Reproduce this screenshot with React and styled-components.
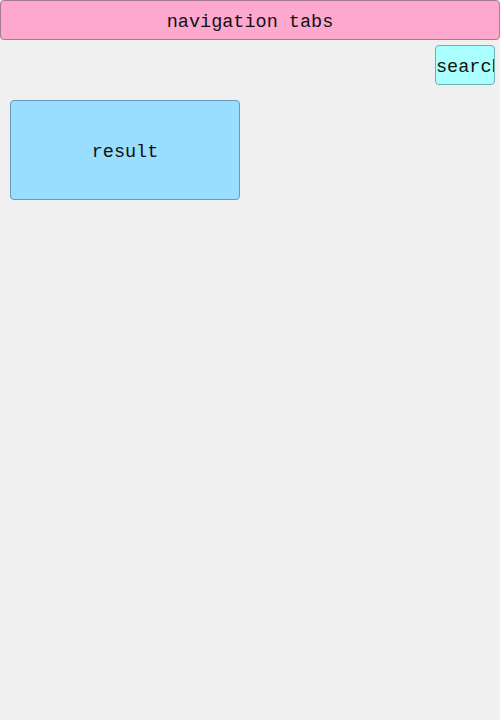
import React from 'react';
import styled, { createGlobalStyle } from 'styled-components';

const GlobalStyle = createGlobalStyle`
  html, body {
    margin: 0;
    padding: 0;
    background: #f0f0f0;
    font-family: "Liberation Mono", "DejaVu Sans Mono", monospace;
  }
`;

const Page = styled.div`
  width: 500px;
  min-height: 720px;
  display: flex;
  flex-direction: column;
`;

const NavBar = styled.div`
  height: 40px;
  box-sizing: border-box;
  padding-top: 4px;
  background: #ffa8cf;
  border: 1px solid #a67a92;
  border-radius: 4px;
  display: flex;
  align-items: center;
  justify-content: center;
  font-size: 18.5px;
  color: #111;
`;

const SearchRow = styled.div`
  display: flex;
  justify-content: flex-end;
  padding: 5px 5px 0 0;
`;

const SearchButton = styled.div`
  width: 60px;
  height: 40px;
  box-sizing: border-box;
  padding-top: 4px;
  background: #aaffff;
  border: 1px solid #6fb0b0;
  border-radius: 4px;
  overflow: hidden;
  white-space: nowrap;
  display: flex;
  align-items: center;
  font-size: 18.5px;
  color: #111;
`;

const ResultCard = styled.div`
  margin: 15px 0 0 10px;
  width: 230px;
  height: 100px;
  box-sizing: border-box;
  padding-top: 4px;
  background: #99ddff;
  border: 1px solid #6699bb;
  border-radius: 4px;
  display: flex;
  align-items: center;
  justify-content: center;
  font-size: 18.5px;
  color: #111;
`;

export default function App() {
  return (
    <Page>
      <GlobalStyle />
      <NavBar>navigation tabs</NavBar>
      <SearchRow>
        <SearchButton>search</SearchButton>
      </SearchRow>
      <ResultCard>result</ResultCard>
    </Page>
  );
}
